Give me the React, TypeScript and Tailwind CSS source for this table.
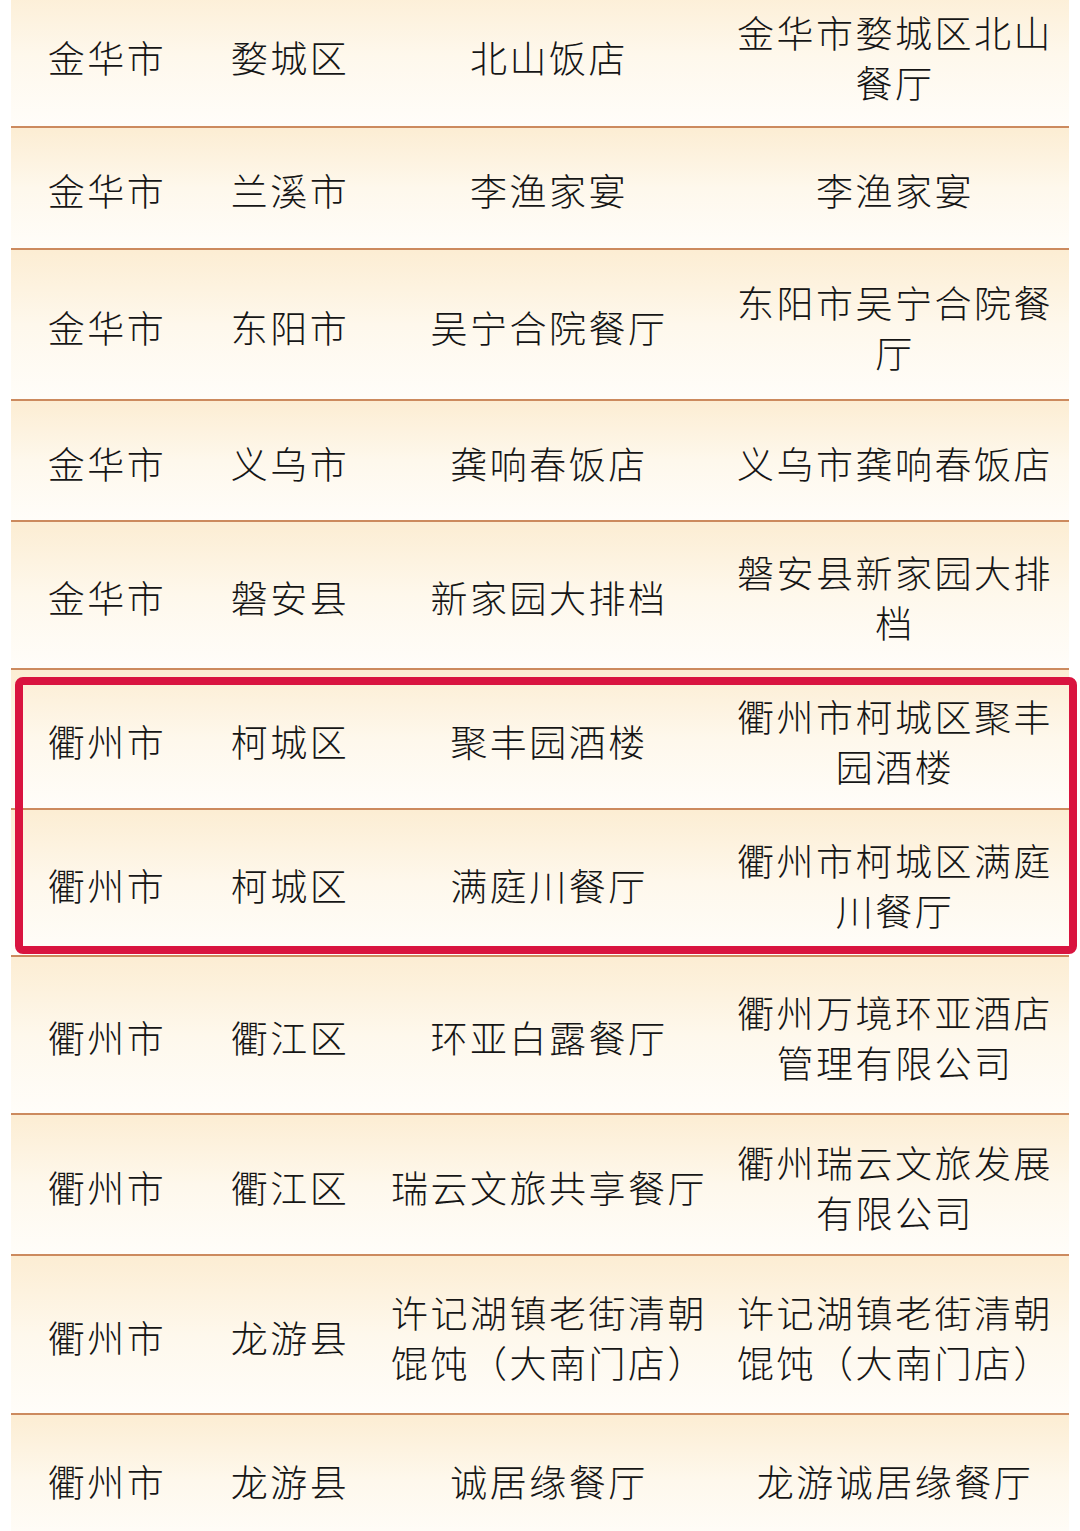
type Row = {
  h: string;
  city: string;
  county: string;
  name: string[];
  unit: string[];
};

const rows: Row[] = [
  { h: 'h-[144px]', city: '金华市', county: '婺城区', name: ['北山饭店'], unit: ['金华市婺城区北山', '餐厅'] },
  { h: 'h-[122px]', city: '金华市', county: '兰溪市', name: ['李渔家宴'], unit: ['李渔家宴'] },
  { h: 'h-[151px]', city: '金华市', county: '东阳市', name: ['吴宁合院餐厅'], unit: ['东阳市吴宁合院餐', '厅'] },
  { h: 'h-[121px]', city: '金华市', county: '义乌市', name: ['龚响春饭店'], unit: ['义乌市龚响春饭店'] },
  { h: 'h-[148px]', city: '金华市', county: '磐安县', name: ['新家园大排档'], unit: ['磐安县新家园大排', '档'] },
  { h: 'h-[140px]', city: '衢州市', county: '柯城区', name: ['聚丰园酒楼'], unit: ['衢州市柯城区聚丰', '园酒楼'] },
  { h: 'h-[147px]', city: '衢州市', county: '柯城区', name: ['满庭川餐厅'], unit: ['衢州市柯城区满庭', '川餐厅'] },
  { h: 'h-[158px]', city: '衢州市', county: '衢江区', name: ['环亚白露餐厅'], unit: ['衢州万境环亚酒店', '管理有限公司'] },
  { h: 'h-[141px]', city: '衢州市', county: '衢江区', name: ['瑞云文旅共享餐厅'], unit: ['衢州瑞云文旅发展', '有限公司'] },
  {
    h: 'h-[159px]',
    city: '衢州市',
    county: '龙游县',
    name: ['许记湖镇老街清朝', '馄饨（大南门店）'],
    unit: ['许记湖镇老街清朝', '馄饨（大南门店）'],
  },
  { h: 'h-[130px]', city: '衢州市', county: '龙游县', name: ['诚居缘餐厅'], unit: ['龙游诚居缘餐厅'] },
];

function Cell({ lines }: { lines: string[] }) {
  return (
    <div className="flex flex-col items-center">
      {lines.map((line) => (
        <div key={line} className="whitespace-nowrap">
          {line}
        </div>
      ))}
    </div>
  );
}

export default function App() {
  return (
    <div className="relative h-[1531px] w-[1080px] overflow-hidden bg-white font-['Noto_Sans_CJK_SC',sans-serif] text-[37px] leading-[50px] font-light tracking-[2.5px] text-[#161616]">
      <div className="mx-[11px] -mt-4">
        {rows.map((row, i) => (
          <div
            key={i}
            className={`grid grid-cols-[192px_174px_344px_348px] items-center border-b-2 border-[#cc8a5e] bg-linear-to-b from-[#fcedd3] via-[#fef8ec] to-[#fffdf9] pt-1 text-center ${row.h}`}
          >
            <Cell lines={[row.city]} />
            <Cell lines={[row.county]} />
            <Cell lines={row.name} />
            <Cell lines={row.unit} />
          </div>
        ))}
      </div>
      <div className="pointer-events-none absolute top-[677px] left-[15px] h-[277px] w-[1062px] rounded-lg border-[8px] border-[#d9143f]" />
    </div>
  );
}
